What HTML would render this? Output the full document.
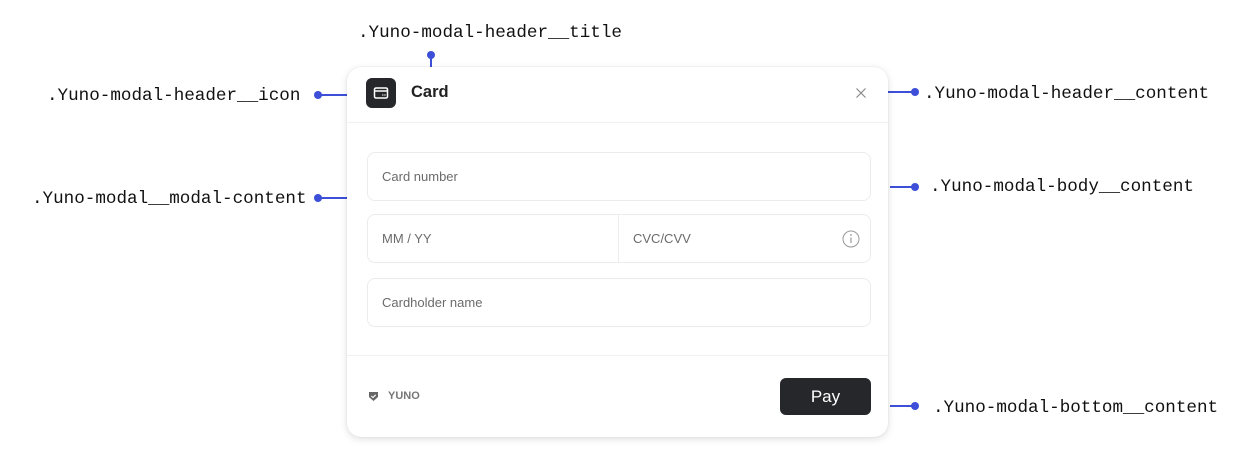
<!DOCTYPE html>
<html><head><style>
body{margin:0;width:1236px;height:458px;background:#fff;position:relative;overflow:hidden;font-family:"Liberation Sans",sans-serif}
.lbl{position:absolute;font-family:"Liberation Mono",monospace;font-size:17.6px;color:#111;line-height:20px;white-space:nowrap}
.dot{position:absolute;width:8px;height:8px;border-radius:50%;background:#3d4fd8}
.hl{position:absolute;height:2px;background:#3d4fd8}
.vl{position:absolute;width:2px;background:#3d4fd8}
.modal{position:absolute;left:347px;top:67px;width:541px;height:370px;border-radius:14px;background:#fff;box-shadow:0 2px 8px rgba(0,0,0,.13),0 0 1px rgba(0,0,0,.15)}
.inp{position:absolute;border:1px solid #ececec;border-radius:8px;font-size:13px;color:#6b6b6b}
</style></head><body>
<div class="lbl" style="left:358px;top:23px">.Yuno-modal-header__title</div>
<div class="dot" style="left:427px;top:51px"></div><div class="vl" style="left:430px;top:55px;height:21px"></div>
<div class="lbl" style="left:47px;top:86px">.Yuno-modal-header__icon</div>
<div class="dot" style="left:314px;top:91px"></div><div class="hl" style="left:318px;top:94px;width:50px"></div>
<div class="lbl" style="left:32px;top:189px">.Yuno-modal__modal-content</div>
<div class="dot" style="left:314px;top:194px"></div><div class="hl" style="left:318px;top:197px;width:30px"></div>
<div class="lbl" style="left:924px;top:84px">.Yuno-modal-header__content</div>
<div class="dot" style="left:911px;top:88px"></div><div class="hl" style="left:888px;top:91px;width:25px"></div>
<div class="lbl" style="left:930px;top:177px">.Yuno-modal-body__content</div>
<div class="dot" style="left:911px;top:183px"></div><div class="hl" style="left:890px;top:186px;width:23px"></div>
<div class="lbl" style="left:933px;top:398px">.Yuno-modal-bottom__content</div>
<div class="dot" style="left:911px;top:402px"></div><div class="hl" style="left:890px;top:405px;width:23px"></div>
<div class="modal">
 <div style="position:absolute;left:19px;top:11px;width:30px;height:30px;border-radius:6px;background:#26272b">
  <svg width="30" height="30" viewBox="0 0 30 30"><rect x="8.5" y="10" width="13" height="10" rx="1.5" fill="none" stroke="#fff" stroke-width="1.5"/><line x1="8.5" y1="13" x2="21.5" y2="13" stroke="#fff" stroke-width="1.5"/><rect x="16" y="16.5" width="1.5" height="1" fill="#fff"/><rect x="18.2" y="16.5" width="1.5" height="1" fill="#fff"/></svg>
 </div>
 <div style="position:absolute;left:64px;top:16px;font-size:16.5px;font-weight:bold;color:#222">Card</div>
 <svg style="position:absolute;left:508px;top:20px" width="12" height="12" viewBox="0 0 12 12"><path d="M1.5 1.5L10.5 10.5M10.5 1.5L1.5 10.5" stroke="#888" stroke-width="1.2"/></svg>
 <div style="position:absolute;left:0;top:55px;width:541px;height:1px;background:#f1f1f3"></div>
 <div class="inp" style="left:20px;top:85px;width:502px;height:47px"><span style="position:absolute;left:14px;top:16px">Card number</span></div>
 <div class="inp" style="left:20px;top:147px;width:502px;height:47px"><span style="position:absolute;left:14px;top:16px">MM / YY</span>
  <div style="position:absolute;left:250px;top:0;width:1px;height:47px;background:#ececec"></div>
  <span style="position:absolute;left:265px;top:16px">CVC/CVV</span>
  <svg style="position:absolute;left:474px;top:15px" width="18" height="18" viewBox="0 0 18 18"><circle cx="9" cy="9" r="8" fill="none" stroke="#999" stroke-width="1"/><line x1="9" y1="7.5" x2="9" y2="13" stroke="#999" stroke-width="1.2"/><circle cx="9" cy="5" r=".9" fill="#999"/></svg>
 </div>
 <div class="inp" style="left:20px;top:211px;width:502px;height:47px"><span style="position:absolute;left:14px;top:16px">Cardholder name</span></div>
 <div style="position:absolute;left:0;top:288px;width:541px;height:1px;background:#f1f1f3"></div>
 <svg style="position:absolute;left:21px;top:324px" width="11" height="11" viewBox="0 0 11 11"><path d="M1 1H10V6L5.5 10L1 6Z" fill="#666"/><path d="M3.3 5L5 6.5L7.7 3.8" stroke="#fff" stroke-width="1.1" fill="none"/></svg>
 <div style="position:absolute;left:41px;top:323px;font-size:11px;font-weight:bold;color:#777">YUNO</div>
 <div style="position:absolute;left:433px;top:311px;width:91px;height:37px;border-radius:6px;background:#26272b;color:#fff;font-size:17px;text-align:center;line-height:37px">Pay</div>
</div>
</body></html>
